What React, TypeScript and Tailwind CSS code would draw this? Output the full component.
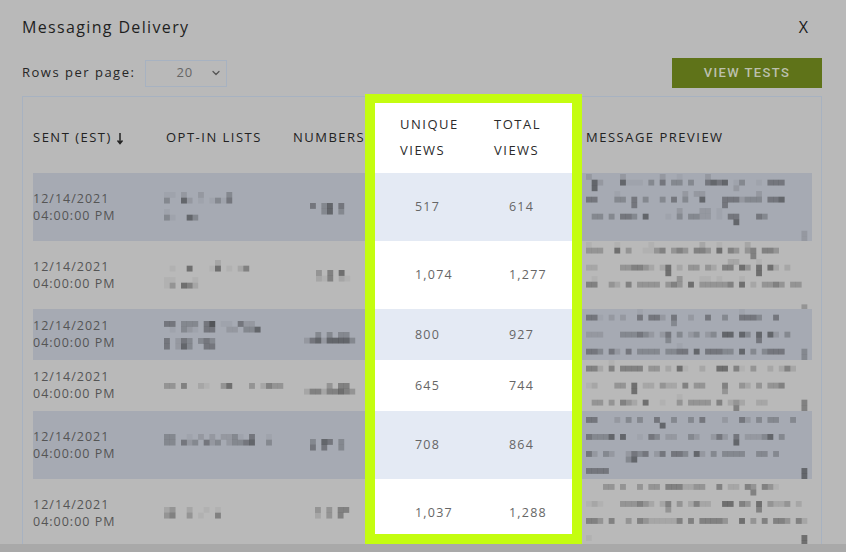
import { ChevronDown } from 'lucide-react';

// blurred-out cells of the screenshot: each string is one line of "column:darkness" pairs
const CELL = 5.67;
const SHADES = [0, 0.04, 0.1, 0.2, 0.3, 0.4, 0.5];

interface MosaicProps {
    lines: string[];
    x: number;
    y: number;
    width: number;
    height: number;
}

function Mosaic({ lines, x, y, width, height }: MosaicProps) {
    return (
        <svg width={width} height={height} className="block blur-[0.6px]">
            {lines.map((line, row) =>
                line.split(' ').filter(Boolean).map((pair) => {
                    const [col, level] = pair.split(':').map(Number);
                    return (
                        <rect
                            key={`${row}-${col}`}
                            x={x + col * CELL}
                            y={y + row * CELL}
                            width={CELL + 0.2}
                            height={CELL + 0.2}
                            fill="#000"
                            fillOpacity={SHADES[level]}
                        />
                    );
                })
            )}
        </svg>
    );
}

interface Row {
    unique: string;
    total: string;
    tall: boolean;
    shaded: boolean;
    lists: { y: number; lines: string[] };
    numbers: { x: number; y: number; lines: string[] };
    previewY: number;
    preview: string[];
}

const rows: Row[] = [
    {
        unique: '517',
        total: '614',
        tall: true,
        shaded: true,
        lists: {
            y: 19,
            lines: [
                '0:1 1:1 3:2 6:2 11:3',
                '0:3 3:5 4:2 6:1 8:1 9:3 10:1 11:4',
                '',
                '0:1',
                '0:3 1:1 4:5 5:3',
            ],
        },
        numbers: { x: 20, y: 30, lines: ['0:4 2:3 3:5 5:4', '2:3 3:5 5:3'] },
        previewY: 1,
        preview: [
            '0:2 6:2 13:2 16:1 21:2',
            '1:5 2:2 6:5 7:1 8:1 9:1 11:3 13:4 15:3 16:3 18:3 21:4 22:5 23:4 24:5 26:1 27:3 30:1 32:4 33:4 34:4',
            '1:5 26:2',
            '5:1 17:2 19:2 20:2 30:2',
            '0:4 1:4 5:3 6:3 8:4 10:3 13:3 15:4 17:3 20:5 24:4 25:4 26:4 27:2 28:3 29:3 30:3 32:4 33:4 34:5',
            '8:4 24:4',
            '16:2 20:2 21:2 23:1',
            '1:3 2:3 4:3 6:4 7:4 8:3 10:5 14:1 16:3 18:3 19:3 20:2 21:2 23:1 25:4 26:4 30:4 31:3',
            '26:5',
            '',
            '38:2',
            '38:2',
        ],
    },
    {
        unique: '1,074',
        total: '1,277',
        tall: true,
        shaded: false,
        lists: {
            y: 19,
            lines: ['9:2', '1:1 4:5 8:1 9:5 11:1 13:2 14:4', '', '0:1 1:1 5:1', '0:1 1:3 3:5 4:4 5:2'],
        },
        numbers: { x: 26, y: 29, lines: ['0:3 2:4 4:5', '0:2 1:1 2:4 4:2 5:1'] },
        previewY: 1,
        preview: [
            '0:1 5:1 11:1 20:2 23:1 28:2',
            '0:3 1:3 2:3 5:5 7:3 10:1 11:1 12:3 13:4 15:3 16:4 17:3 19:4 20:4 21:3 23:5 25:4 26:3 28:3 29:4 31:4 32:4 33:3',
            '29:4',
            '25:2 26:2 30:1',
            '0:2 1:2 6:3 7:3 8:4 9:4 10:3 11:2 13:2 14:5 16:2 18:3 19:3 21:3 22:2 24:4 25:4 27:5 28:3 30:5 32:5 33:2 35:2',
            '14:5 30:5',
            '1:1 16:3 20:1 21:1 23:1 27:1',
            '0:4 1:4 4:3 5:2 7:4 9:3 10:3 11:3 12:3 14:3 15:4 16:3 18:5 20:3 21:3 22:3 23:3 24:3 25:4 27:5 29:2 31:3 32:3 33:4 34:3 36:3 37:3',
            '',
            '',
            '',
            '38:3',
        ],
    },
    {
        unique: '800',
        total: '927',
        tall: false,
        shaded: true,
        lists: {
            y: 12,
            lines: [
                '0:4 1:4 3:3 4:3 5:3 7:4 8:6 10:1 11:1 13:4 14:2 15:2',
                '1:1 3:3 4:2 5:1 7:4 8:4 11:2 12:2 14:3 15:3 16:5',
                '',
                '0:4 2:2 3:4 4:3 6:3 7:4 8:3',
                '0:4 2:2 3:5 4:3 7:4 8:4',
            ],
        },
        numbers: {
            x: 14,
            y: 23,
            lines: ['2:3 4:3 6:3 7:3', '0:2 1:4 2:5 3:2 4:5 5:5 6:5 7:5 8:3'],
        },
        previewY: 0,
        preview: [
            '9:1 27:1',
            '0:4 1:4 2:1 4:2 6:2 9:4 11:4 12:4 13:2 15:4 18:2 21:4 24:3 27:4 28:4 29:4 30:3 33:4',
            '15:3',
            '',
            '0:2 1:2 2:2 6:3 7:3 8:3 9:4 10:3 11:2 13:2 14:4 16:3 18:2 19:3 21:2 22:3 24:5 25:5 27:5 28:3 30:5 32:5 33:2 35:3',
            '14:3 30:4',
            '16:1',
            '0:4 1:4 2:3 4:4 5:2 7:4 9:3 10:3 11:3 12:3 14:3 15:3 16:4 17:4 19:5 21:4 22:4 23:4 24:3 25:3 27:5 29:3 31:3 32:4 33:4 34:4 38:3',
            '38:3',
        ],
    },
    {
        unique: '645',
        total: '744',
        tall: false,
        shaded: false,
        lists: { y: 23, lines: ['0:3 1:3 3:4 6:2 7:1 10:3 11:5 15:3 17:2 18:4 19:3 20:3'] },
        numbers: {
            x: 14,
            y: 23,
            lines: ['4:3 6:4 7:4', '0:2 1:4 2:4 3:2 4:4 5:4 6:5 7:4 8:3'],
        },
        previewY: 0,
        preview: [
            '4:1',
            '0:4 1:4 2:2 4:4 6:4 7:4 8:4 9:4 11:3 12:3 14:2 16:5 17:1 20:2 23:5 24:5 26:4 27:1 29:3 32:2 34:2 35:4 36:2',
            '',
            '',
            '0:1 1:2 5:3 6:3 8:5 10:2 11:2 13:3 14:2 15:2 17:4 19:3 20:3 24:4 27:3 28:2 30:3 32:3 33:3 34:4',
            '8:5 24:3',
            '16:1',
            '1:3 2:3 4:3 6:4 7:3 8:2 10:5 13:1 16:3 18:3 19:3 20:3 21:3 23:4 25:2 26:3 27:2 30:2 31:2 38:4',
            '26:4 38:4',
        ],
    },
    {
        unique: '708',
        total: '864',
        tall: true,
        shaded: true,
        lists: {
            y: 23,
            lines: [
                '0:3 1:3 4:1 6:2 8:2 10:2 11:2 12:3 13:1 15:4 18:1',
                '0:3 1:3 3:4 4:2 5:3 7:4 8:2 9:3 11:2 12:3 13:3 14:4 15:5 18:3',
            ],
        },
        numbers: { x: 20, y: 28, lines: ['0:3 2:5 3:4 5:3', '0:4 2:4 5:3'] },
        previewY: 6,
        preview: [
            '0:4 1:4 5:2 7:3 9:3 12:4 15:3 18:3 20:4 24:2 27:4 28:2 30:3 32:3 33:3 36:3',
            '13:5',
            '',
            '0:4 1:3 2:3 3:3 4:5 6:5 9:1 11:4 12:3 14:2 15:2 18:3 19:2 22:2 23:4 24:2 26:4 28:2 29:2 30:2 31:3 32:5 34:3',
            '26:5',
            '',
            '0:4 1:2 3:3 4:2 7:2 8:4 9:3 10:4 12:2 13:4 15:4 16:4 17:3 19:5 20:2 22:3 24:3 25:3 26:3 27:3 30:3 31:3 33:3',
            '7:3 8:5',
            '',
            '0:4 1:4 2:4 3:4 38:5',
            '38:5',
        ],
    },
    {
        unique: '1,037',
        total: '1,288',
        tall: true,
        shaded: false,
        lists: { y: 28, lines: ['0:2 1:3 4:2 7:1 9:1', '0:3 1:4 4:3 6:1 9:4'] },
        numbers: { x: 25, y: 28, lines: ['0:3 2:3 4:4 5:4', '0:2 2:3 4:4'] },
        previewY: 5,
        preview: [
            '3:3 4:3 6:3 9:3 11:3 12:3 14:4 15:4 16:4 17:2 18:2 19:3 20:3 23:4 25:2 26:2 28:4 29:3 31:4 32:3 33:1',
            '29:4',
            '',
            '0:1 1:2 2:1 6:3 7:3 8:3 9:4 10:3 11:2 13:2 14:4 16:3 18:2 19:4 20:2 21:2 24:5 25:5 27:4 28:3 30:5 32:3 33:2 34:2 35:3 37:2',
            '14:3 30:4',
            '',
            '0:4 1:4 2:3 4:4 7:3 9:4 10:3 11:2 12:2 13:2 14:2 15:2 16:4 18:4 20:4 21:4 22:4 23:4 24:3 27:5 29:3 31:4 33:4 34:4 35:3 37:4 38:2',
            '',
            '',
            '0:1 38:5',
            '38:5',
        ],
    },
];

export default function App() {
    return (
        <div className="relative flex h-[552px] w-[846px] flex-col overflow-hidden bg-[#b9b9b9] font-['Open_Sans',sans-serif]">
            <div className="flex h-[544px] flex-col overflow-hidden pl-[22px] pr-[24px]">
                <div className="flex h-[58px] shrink-0 items-center justify-between pb-[4px]">
                    <h1 className="text-[16px] tracking-[1.35px] text-[#1f1f1f]">Messaging Delivery</h1>
                    <span className="pr-[14px] text-[16px] text-[#1a1a1a]">X</span>
                </div>

                <div className="flex h-[30px] shrink-0 items-center">
                    <span className="text-[13px] tracking-[1.5px] text-[#262626]">Rows per page:</span>
                    <div className="relative ml-[10px] flex h-[27px] w-[82px] items-center border border-[#a7b2c1] pl-[30px] text-[13px] tracking-[1px] text-[#666666]">
                        20
                        <ChevronDown className="absolute right-[4px] top-[6px] h-[12px] w-[12px] text-[#555555]" strokeWidth={2.5} />
                    </div>
                    <button className="ml-auto h-[30px] w-[150px] bg-[#5f7319] font-['Roboto',sans-serif] text-[13px] font-medium tracking-[1.4px] text-[#bcc0ae]">
                        VIEW TESTS
                    </button>
                </div>

                <div className="mt-[8px] flex-1 border-l border-r border-t border-[#a7b2c1] pl-[10px] pr-[9px]">
                    <div className="grid h-[76px] grid-cols-[125px_132px_75px_217px_230px] items-center pt-[6px] text-[13px] tracking-[1.5px] text-[#222222]">
                        <div className="flex items-center gap-[4px] whitespace-nowrap">
                            SENT (EST)
                            <svg width="8" height="13" viewBox="0 0 8 13" fill="none" stroke="currentColor" strokeWidth="1.5">
                                <path d="M4 1v10.5M1.5 8.5 4 11.5l2.5-3" />
                            </svg>
                        </div>
                        <div className="whitespace-nowrap pl-[8px]">OPT-IN LISTS</div>
                        <div className="whitespace-nowrap pl-[3px]">NUMBERS</div>
                        <div />
                        <div className="whitespace-nowrap pl-[4px]">MESSAGE PREVIEW</div>
                    </div>

                    {rows.map((row) => (
                        <div
                            key={row.unique}
                            className={`grid grid-cols-[125px_132px_75px_217px_230px] ${row.tall ? 'h-[68px]' : 'h-[51px]'} ${row.shaded ? 'bg-[#a6aab3]' : ''}`}
                        >
                            <div className={`self-center text-[12.5px] leading-[17px] tracking-[1px] text-[#555555] ${row.tall ? '' : 'pb-[2px]'}`}>
                                <div>12/14/2021</div>
                                <div>04:00:00 PM</div>
                            </div>
                            <Mosaic lines={row.lists.lines} x={6} y={row.lists.y} width={132} height={row.tall ? 68 : 51} />
                            <Mosaic lines={row.numbers.lines} x={row.numbers.x} y={row.numbers.y} width={75} height={row.tall ? 68 : 51} />
                            <div />
                            <Mosaic lines={row.preview} x={4} y={row.previewY} width={230} height={row.tall ? 68 : 51} />
                        </div>
                    ))}
                </div>
            </div>
            <div className="flex-1 bg-[#a9a9a9]" />

            {/* highlighted columns sit on top of the dimmed table */}
            <div className="absolute left-[365px] top-[94px] h-[450px] w-[217px] overflow-hidden border-x-[10px] border-b-[10px] border-t-[9px] border-[#c4fd10] bg-white">
                <div className="grid h-[70px] grid-cols-[94px_103px] content-center pb-[2px] text-[13px] leading-[26px] tracking-[1.5px] text-[#2b2b2b]">
                    <div className="pl-[25px]">UNIQUE<br />VIEWS</div>
                    <div className="pl-[25px]">TOTAL<br />VIEWS</div>
                </div>
                {rows.map((row) => (
                    <div
                        key={row.unique}
                        className={`grid grid-cols-[94px_103px] items-center pt-[1px] text-[12.5px] tracking-[1.2px] text-[#666666] ${row.tall ? 'h-[68px]' : 'h-[51px]'} ${row.shaded ? 'bg-[#e4eaf4]' : ''}`}
                    >
                        <div className="pl-[40px]">{row.unique}</div>
                        <div className="pl-[40px]">{row.total}</div>
                    </div>
                ))}
            </div>
        </div>
    );
}
